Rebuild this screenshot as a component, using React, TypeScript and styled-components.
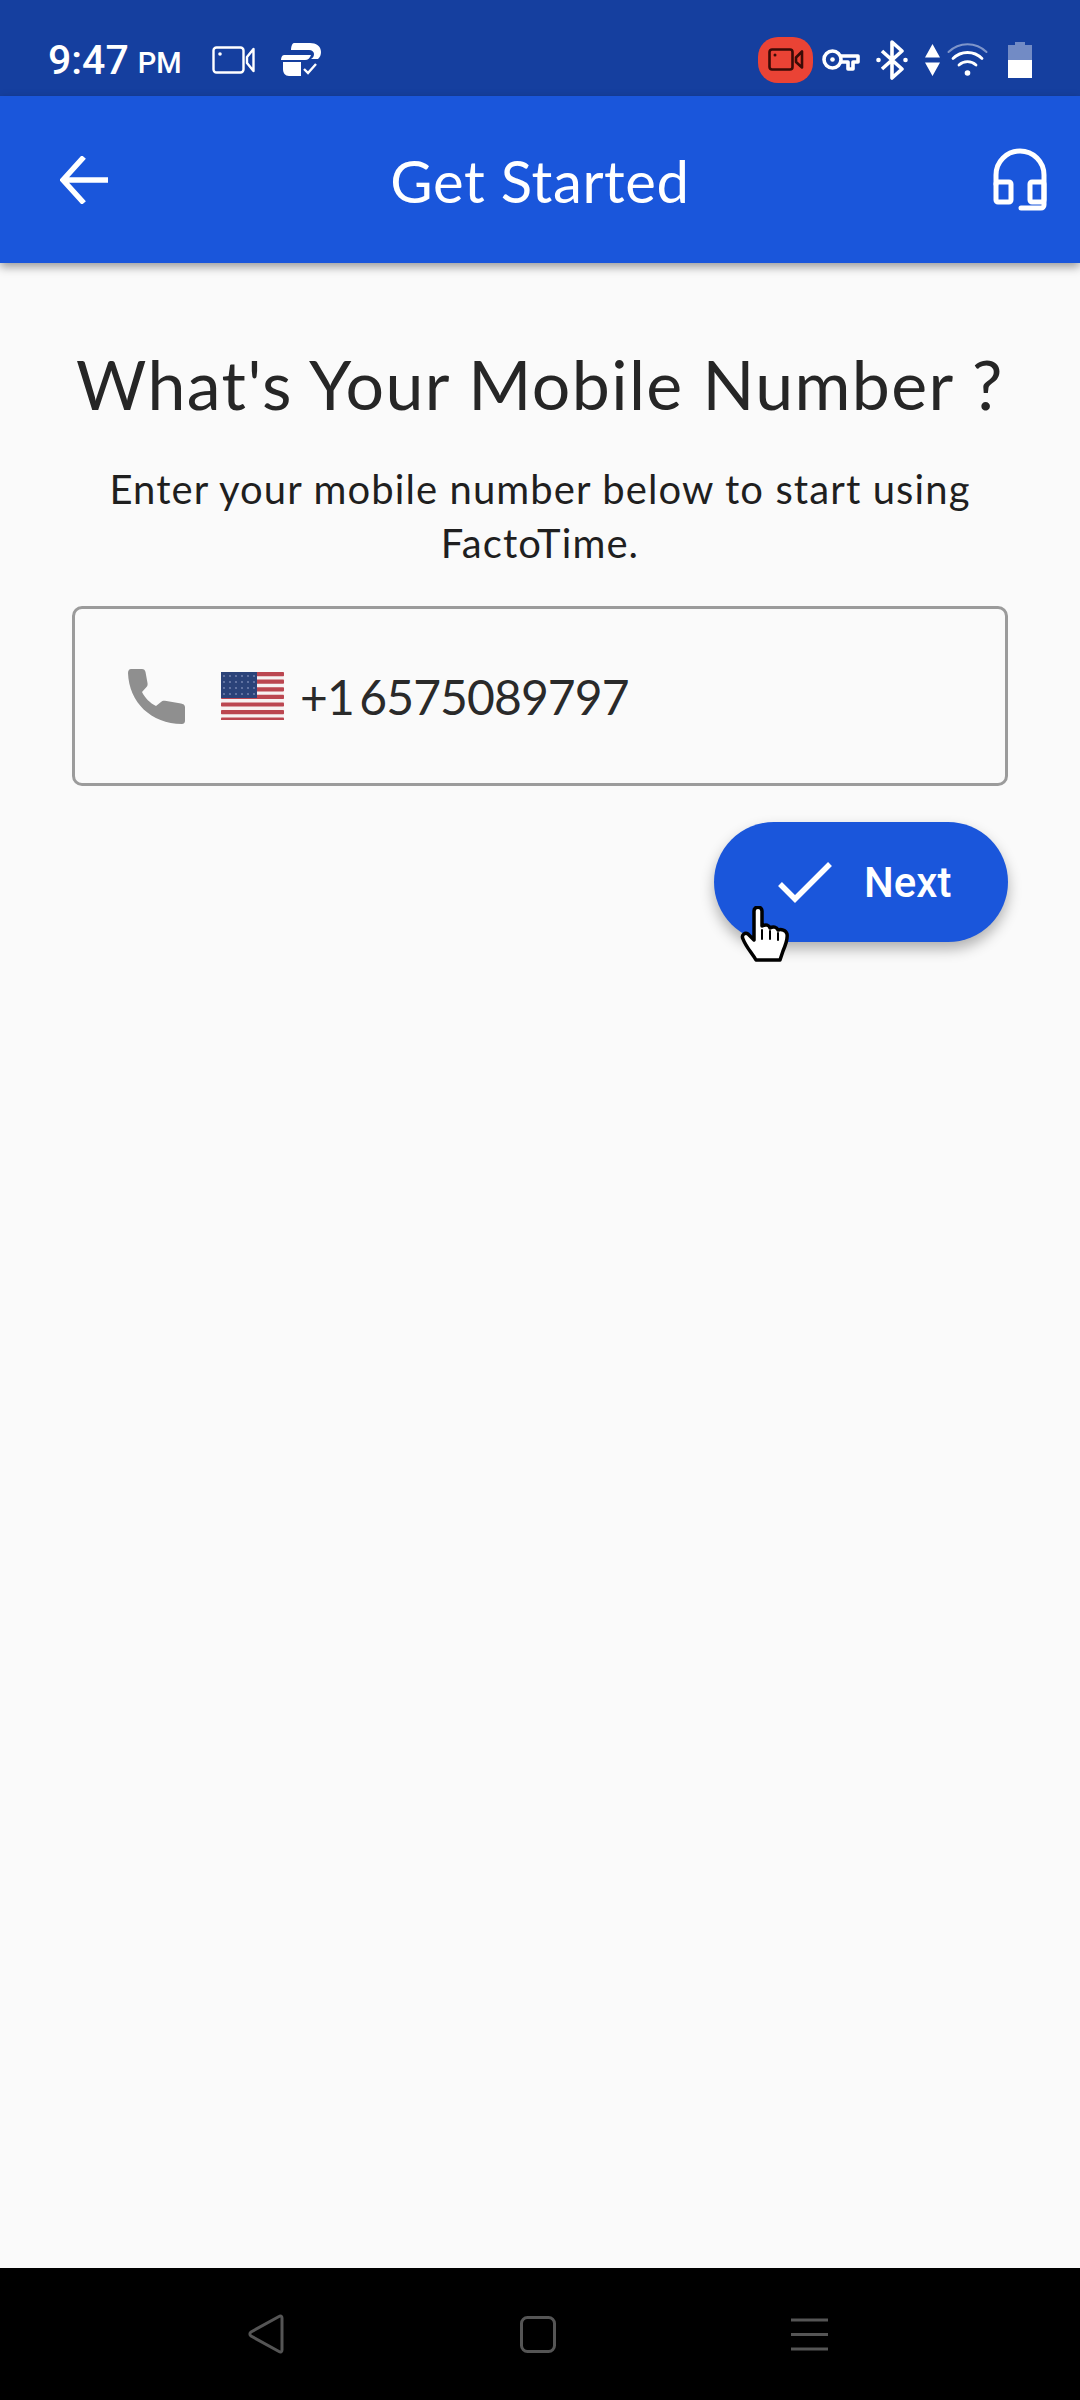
import React from 'react';
import styled, { createGlobalStyle } from 'styled-components';

const GlobalStyle = createGlobalStyle`
  html, body {
    margin: 0;
    padding: 0;
    background: #fafafa;
  }
  * {
    box-sizing: border-box;
  }
`;

const Screen = styled.div`
  display: flex;
  flex-direction: column;
  width: 1080px;
  height: 2400px;
  overflow: hidden;
  background: #fafafa;
  font-family: Lato, "Open Sans", sans-serif;
`;

const StatusBar = styled.div`
  display: flex;
  justify-content: space-between;
  align-items: center;
  height: 96px;
  padding: 24px 48px 0 48px;
  background: #153f9f;
  color: #fff;
  font-family: Roboto, sans-serif;
`;

const StatusGroup = styled.div`
  display: flex;
  align-items: center;
`;

const Clock = styled.span`
  font-size: 41px;
  font-weight: 500;
  line-height: 1;
`;

const ClockSuffix = styled.span`
  margin: 6px 0 0 9px;
  font-size: 29px;
  font-weight: 500;
`;

const StatusIcon = styled.svg<{ $gap: number }>`
  display: block;
  flex: none;
  margin-left: ${props => props.$gap}px;
`;

const RecordPill = styled.div`
  display: flex;
  justify-content: center;
  align-items: center;
  width: 55px;
  height: 46px;
  border-radius: 20px;
  background: #ea4335;
`;

const AppBar = styled.header`
  position: relative;
  z-index: 1;
  display: grid;
  grid-template-columns: 1fr auto 1fr;
  align-items: center;
  height: 167px;
  padding: 0 33px;
  background: #1a56db;
  color: #fff;
  box-shadow: 0 4px 9px rgba(0, 0, 0, 0.38);
`;

const BackIcon = styled.svg`
  display: block;
  margin-left: 27px;
`;

const AppBarTitle = styled.h1`
  margin: 2px 0 0;
  font-size: 58px;
  font-weight: 400;
  letter-spacing: 0.6px;
`;

const AppBarAction = styled.svg`
  display: block;
  justify-self: end;
`;

const Content = styled.main`
  flex: 1;
  display: flex;
  flex-direction: column;
  padding: 81px 72px 0;
`;

const Heading = styled.h2`
  margin: 0;
  color: #262626;
  font-size: 68px;
  line-height: 80px;
  font-weight: 400;
  letter-spacing: 1.4px;
  text-align: center;
  white-space: nowrap;
`;

const Intro = styled.p`
  margin: 38px 0 0;
  color: #1f1f1f;
  font-size: 40px;
  line-height: 54px;
  letter-spacing: 1.1px;
  text-align: center;
`;

const PhoneField = styled.div`
  display: flex;
  align-items: center;
  height: 180px;
  margin-top: 36px;
  padding-left: 53px;
  border: 3px solid #9b9b9b;
  border-radius: 10px;
`;

const PhoneNumber = styled.span`
  margin-left: 16px;
  color: #2a2a2a;
  font-size: 48px;
  letter-spacing: -0.9px;
  word-spacing: -6px;
`;

const FlagIcon = styled.svg`
  display: block;
  margin-left: 36px;
`;

const Actions = styled.div`
  display: flex;
  justify-content: flex-end;
  margin-top: 36px;
`;

const NextButton = styled.button`
  position: relative;
  display: flex;
  align-items: center;
  width: 294px;
  height: 120px;
  padding: 0 0 0 64px;
  border: none;
  border-radius: 60px;
  background: #1a56db;
  color: #fff;
  font-family: Roboto, sans-serif;
  font-size: 42px;
  font-weight: 500;
  box-shadow: 0 7px 14px rgba(0, 0, 0, 0.3);
`;

const NextLabel = styled.span`
  margin-left: 32px;
`;

const Pointer = styled.svg`
  position: absolute;
  left: 26px;
  top: 84px;
`;

const NavBar = styled.nav`
  display: flex;
  justify-content: space-between;
  align-items: center;
  height: 132px;
  padding: 0 252px 0 248px;
  background: #000;
`;

const NavIcon = styled.svg`
  display: block;
`;

const FLAG_STRIPES = [0, 1, 2, 3, 4, 5, 6];
const FLAG_STARS = [3, 9, 15, 21, 27, 33];

const UsFlag = () => (
  <FlagIcon width="63" height="48" viewBox="0 0 63 48">
    <rect width="63" height="48" fill="#f7f2f2" />
    {FLAG_STRIPES.map(i => (
      <rect key={i} y={i * 7.6} width="63" height="4.2" rx="0.8" fill="#bb4650" />
    ))}
    <rect width="36" height="26" fill="#2b4379" />
    {FLAG_STARS.map(x => [4, 10, 16, 22].map(y => (
      <circle key={`${x}-${y}`} cx={x} cy={y} r="1.1" fill="#6f7fab" />
    )))}
  </FlagIcon>
);

const App = () => {
  return (
    <Screen>
      <GlobalStyle />
      <StatusBar>
        <StatusGroup>
          <Clock>9:47</Clock>
          <ClockSuffix>PM</ClockSuffix>
          <StatusIcon $gap={30} width="44" height="28" viewBox="0 0 44 28" fill="none" stroke="#fff" strokeWidth="2.4">
            <rect x="1.5" y="1.5" width="30" height="25" rx="3" />
            <path d="M35 11 41.5 3v22L35 17Z" strokeLinejoin="round" />
            <circle cx="8" cy="8" r="1.8" fill="#fff" stroke="none" />
          </StatusIcon>
          <StatusIcon $gap={24} width="42" height="36" viewBox="0 0 42 36">
            <path d="M14 1h16c6 0 11 3 11 9 0 3-1 5-3 7h-7c2-1 3-3 3-5 0-2-2-4-5-4H11c0-3 1-7 3-7Z" fill="#fff" />
            <path d="M4 13h27c-1 3-3 5-6 5H1c0-2 1-5 3-5Z" fill="#fff" />
            <path d="M3 20h18v14H9c-4 0-6-3-6-7v-7Z" fill="#fff" />
            <path d="M24 27l4 4 8-9" fill="none" stroke="#fff" strokeWidth="2.400" />
          </StatusIcon>
        </StatusGroup>
        <StatusGroup>
          <RecordPill>
            <svg width="36" height="24" viewBox="0 0 36 24" fill="none" stroke="#3a0b06" strokeWidth="2.600">
              <rect x="1.500" y="1.500" width="23" height="20" rx="2.500" />
              <path d="M28 9.500 34 3.500v16L28 14Z" strokeLinejoin="round" />
              <circle cx="7" cy="7" r="1.500" fill="#3a0b06" stroke="none" />
            </svg>
          </RecordPill>
          <StatusIcon $gap={9} width="38" height="24" viewBox="0 0 38 24" fill="none" stroke="#fff" strokeWidth="3.600" strokeLinejoin="round">
            <circle cx="10.500" cy="11.500" r="8.500" />
            <path d="M19 8h17v6h-5v7h-5v-7h-7" />
            <circle cx="10.500" cy="11.500" r="2.300" fill="#fff" stroke="none" />
          </StatusIcon>
          <StatusIcon $gap={16} width="32" height="40" viewBox="0 0 32 40" fill="none" stroke="#fff" strokeWidth="3.600">
            <path d="M6 11 26 29 16 38V2l10 9L6 29" strokeLinejoin="round" />
            <circle cx="2.500" cy="20" r="2.300" fill="#fff" stroke="none" />
            <circle cx="29.500" cy="20" r="2.300" fill="#fff" stroke="none" />
          </StatusIcon>
          <StatusIcon $gap={17} width="15" height="32" viewBox="0 0 15 32">
            <path d="M7.500 0 15 13.500H0ZM0 18.500h15L7.500 32Z" fill="#fff" />
          </StatusIcon>
          <StatusIcon $gap={7} width="41" height="34" viewBox="0 0 41 34" fill="none" stroke="#fff" strokeLinecap="round">
            <path d="M1.500 9a27 27 0 0 1 38 0" strokeWidth="2" opacity="0.45" />
            <path d="M6 15.500a20.500 20.500 0 0 1 29 0" strokeWidth="2.800" />
            <path d="M12 22a12.500 12.500 0 0 1 17 0" strokeWidth="2.800" />
            <circle cx="20.500" cy="30" r="2.800" fill="#fff" stroke="none" />
          </StatusIcon>
          <StatusIcon $gap={20} width="24" height="36" viewBox="0 0 24 36">
            <path d="M7 0h10v3h7v15H0V3h7Z" fill="#fff" opacity="0.4" />
            <rect y="18" width="24" height="18" fill="#fff" />
          </StatusIcon>
        </StatusGroup>
      </StatusBar>

      <AppBar>
        <BackIcon width="48" height="48" viewBox="0 0 48 48" fill="none" stroke="#fff" strokeWidth="5.500" strokeLinecap="square">
          <path d="M22 3 3 24l19 21M5 24h41" />
        </BackIcon>
        <AppBarTitle>Get Started</AppBarTitle>
        <AppBarAction width="54" height="64" viewBox="0 0 54 64" fill="none" stroke="#fff" strokeWidth="5" strokeLinejoin="round">
          <path d="M3 36V27a24 24 0 0 1 48 0v30a3 3 0 0 1-3 3H28" strokeLinecap="round" />
          <rect x="3" y="34" width="15" height="20" rx="2" />
          <rect x="37" y="34" width="14" height="20" rx="2" />
        </AppBarAction>
      </AppBar>

      <Content>
        <Heading>What's Your Mobile Number ?</Heading>
        <Intro>Enter your mobile number below to start using FactoTime.</Intro>
        <PhoneField>
          <svg width="57" height="55" viewBox="0 0 57 55">
            <path d="M3 0h11c2 0 3 1 3.500 3l2 11c.3 1.500 0 3-1 4l-4.500 5c3 6 8 11 14 14l5-4c1-1 2.500-1.500 4-1.200l16 2.700c2 .3 4 1.500 4 3.500v14c0 2-1.500 3-3 3C23 55 1 33 0 4c0-2 1-4 3-4Z" fill="#8f8f8f" />
          </svg>
          <UsFlag />
          <PhoneNumber>+1 6575089797</PhoneNumber>
        </PhoneField>
        <Actions>
          <NextButton>
            <svg width="54" height="42" viewBox="0 0 54 42" fill="none" stroke="#fff" strokeWidth="5.500">
              <path d="M2 23 17 38 52 3" />
            </svg>
            <NextLabel>Next</NextLabel>
            <Pointer width="52" height="56" viewBox="0 0 52 56">
              <path d="M14 5c0-5 8-5 8 0v15c4-2 7-1 8 2 3-2 7-1 8 2 3-1 8 0 9 4 1 5-1 10-4 17-1 3-2 6-3 9H16C12 47 6 41 3 33c-2-4 2-7 5-5l6 6Z" fill="#fff" stroke="#000" strokeWidth="3.500" strokeLinejoin="round" />
              <path d="M22 24v9M30 25v8M38 27v7" fill="none" stroke="#000" strokeWidth="2" strokeLinecap="round" />
            </Pointer>
          </NextButton>
        </Actions>
      </Content>

      <NavBar>
        <NavIcon width="36" height="40" viewBox="0 0 36 40" fill="none" stroke="#555" strokeWidth="3" strokeLinejoin="round">
          <path d="M31 2.500c1.500-1 3-.5 3 1.500v32c0 2-1.500 2.500-3 1.500L3 22c-1.500-1-1.500-3 0-4Z" />
        </NavIcon>
        <NavIcon width="36" height="37" viewBox="0 0 36 37" fill="none" stroke="#555" strokeWidth="3">
          <rect x="1.500" y="1.500" width="33" height="34" rx="6" />
        </NavIcon>
        <NavIcon width="37" height="33" viewBox="0 0 37 33" fill="none" stroke="#555" strokeWidth="3">
          <path d="M0 2h37M0 16.500h37M0 31h37" />
        </NavIcon>
      </NavBar>
    </Screen>
  );
};

export default App;
